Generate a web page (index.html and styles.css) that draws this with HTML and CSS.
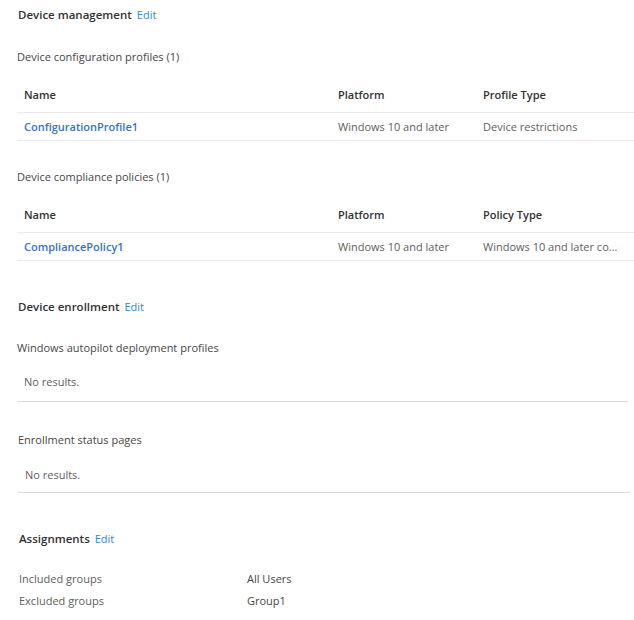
FILE: index.html
```html
<!DOCTYPE html>
<html lang="en">
<head>
  <meta charset="UTF-8">
  <meta name="viewport" content="width=device-width, initial-scale=1.0">
  <title>Review settings</title>
  <link rel="stylesheet" href="styles.css">
</head>
<body>
  <div class="page">
    <!-- Device management -->
    <div class="section-title">Device management <a class="edit" href="#">Edit</a></div>

    <div class="sub-title">Device configuration profiles (1)</div>
    <div class="grid">
      <div class="row head">
        <span>Name</span><span>Platform</span><span>Profile Type</span>
      </div>
      <div class="row">
        <a class="name-link" href="#">ConfigurationProfile1</a>
        <span>Windows 10 and later</span>
        <span>Device restrictions</span>
      </div>
    </div>

    <div class="sub-title second">Device compliance policies (1)</div>
    <div class="grid">
      <div class="row head">
        <span>Name</span><span>Platform</span><span>Policy Type</span>
      </div>
      <div class="row">
        <a class="name-link" href="#">CompliancePolicy1</a>
        <span>Windows 10 and later</span>
        <span class="clip">Windows 10 and later co...</span>
      </div>
    </div>

    <!-- Device enrollment -->
    <div class="section-title enroll">Device enrollment <a class="edit" href="#">Edit</a></div>

    <div class="sub-title autopilot">Windows autopilot deployment profiles</div>
    <div class="empty">No results.</div>

    <div class="lower">
      <div class="sub-title">Enrollment status pages</div>
      <div class="empty">No results.</div>

      <!-- Assignments -->
      <div class="section-title assign">Assignments <a class="edit" href="#">Edit</a></div>
      <div class="props">
        <span class="label">Included groups</span><span>All Users</span>
        <span class="label">Excluded groups</span><span>Group1</span>
      </div>
    </div>
  </div>
</body>
</html>
```

FILE: styles.css
```css
body {
  margin: 0;
  background: #fff;
  font-family: "Open Sans", "Noto Sans", sans-serif;
  font-size: 11px;
  line-height: 16px;
  color: #323130;
}
a {
  text-decoration: none;
}
.page {
  padding: 7px 0 0 18px;
}

.section-title {
  font-weight: 600;
  font-size: 11.5px;
  color: #323130;
}
.section-title .edit {
  font-size: 11px;
  font-weight: 400;
  color: #2b88d8;
  margin-left: 2px;
}

.sub-title {
  margin-top: 26px;
  margin-left: -1px;
  color: #484644;
}
.sub-title.second {
  margin-top: 28px;
}
.sub-title.autopilot {
  margin-top: 25px;
}

/* tables */
.grid {
  margin-top: 14px;
  margin-left: -1px;
}
.row {
  display: grid;
  grid-template-columns: 314px 145px 1fr;
  padding: 6px 0 5px 7px;
  border-bottom: 1px solid #edebe9;
  color: #605e5c;
}
.row.head {
  padding: 8px 0 9px 7px;
  font-weight: 600;
  color: #323130;
}
.name-link {
  color: #3a6fc4;
  font-weight: 600;
}
.clip {
  white-space: nowrap;
}

.section-title.enroll {
  margin-top: 38px;
}

.empty {
  margin-top: 10px;
  margin-left: -1px;
  padding: 8px 0 11px 7px;
  border-bottom: 1px solid #dcdad8;
  color: #605e5c;
  margin-right: 6px;
}

.lower {
  padding-left: 1px;
}
.lower .sub-title {
  margin-top: 30px;
}
.lower .empty {
  margin-top: 11px;
  padding-bottom: 9px;
  margin-right: 4px;
}

.section-title.assign {
  margin-top: 38px;
}

.props {
  margin-top: 24px;
  display: grid;
  grid-template-columns: 228px 1fr;
  row-gap: 6px;
  color: #605e5c;
}
.props span:not(.label) {
  color: #484644;
}
```
